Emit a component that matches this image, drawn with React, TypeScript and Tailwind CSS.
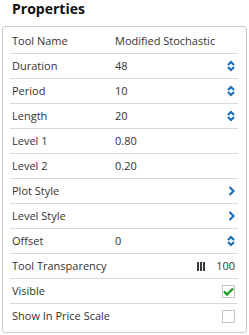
import type { ReactNode } from 'react';

// ─── Types ────────────────────────────────────────────────────────────────────

type Control = 'spin' | 'chevron' | 'slider' | 'checked' | 'unchecked' | null;

interface PropRow {
  label: string;
  value?: string;
  control: Control;
}

const ROWS: PropRow[] = [
  { label: 'Tool Name', value: 'Modified Stochastic', control: null },
  { label: 'Duration', value: '48', control: 'spin' },
  { label: 'Period', value: '10', control: 'spin' },
  { label: 'Length', value: '20', control: 'spin' },
  { label: 'Level 1', value: '0.80', control: null },
  { label: 'Level 2', value: '0.20', control: null },
  { label: 'Plot Style', control: 'chevron' },
  { label: 'Level Style', control: 'chevron' },
  { label: 'Offset', value: '0', control: 'spin' },
  { label: 'Tool Transparency', control: 'slider' },
  { label: 'Visible', control: 'checked' },
  { label: 'Show In Price Scale', control: 'unchecked' },
];

// ─── Icons ────────────────────────────────────────────────────────────────────

function SpinIcon() {
  return (
    <svg width="8" height="12" viewBox="0 0 8 12" className="block">
      <path d="M1 5 L4 2 L7 5" fill="none" stroke="#1d6fb8" strokeWidth="2.2" />
      <path d="M1 7 L4 10 L7 7" fill="none" stroke="#1d6fb8" strokeWidth="2.2" />
    </svg>
  );
}

function ChevronIcon() {
  return (
    <svg width="7" height="10" viewBox="0 0 7 10" className="block">
      <path d="M1.5 1 L5.5 5 L1.5 9" fill="none" stroke="#1d6fb8" strokeWidth="2.2" />
    </svg>
  );
}

function Checkbox({ checked }: { checked: boolean }) {
  return (
    <span className="flex h-[13px] w-[13px] items-center justify-center border border-[#c4c4c4] bg-white">
      {checked && (
        <svg width="11" height="9" viewBox="0 0 11 9" className="block">
          <path d="M1 4.5 L4 7.5 L10 1.5" fill="none" stroke="#1f9a22" strokeWidth="2.4" />
        </svg>
      )}
    </span>
  );
}

function renderControl(control: Control): ReactNode {
  switch (control) {
    case 'spin':
      return <SpinIcon />;
    case 'chevron':
      return <ChevronIcon />;
    case 'slider':
      return (
        <span className="flex items-center">
          <span className="flex h-[9px] gap-[1px]">
            <span className="w-[2px] bg-[#3a3a3a]" />
            <span className="w-[2px] bg-[#3a3a3a]" />
            <span className="w-[2px] bg-[#3a3a3a]" />
          </span>
          <span className="ml-[11px]">100</span>
        </span>
      );
    case 'checked':
      return <Checkbox checked />;
    case 'unchecked':
      return <Checkbox checked={false} />;
    default:
      return null;
  }
}

// ─── Page ─────────────────────────────────────────────────────────────────────

export default function App() {
  return (
    <div
      className="h-[335px] w-[249px] bg-white text-[#333]"
      style={{ fontFamily: '"Open Sans", "Liberation Sans", sans-serif' }}
    >
      <h2 className="pl-3 text-[14px] font-bold leading-[18px] text-[#111]">Properties</h2>

      <div className="mx-[2px] mt-2 rounded-[3px] border border-[#c9c9c9] pb-[3px] pl-[7px] pr-[8px] pt-[2px]">
        {ROWS.map((row, i) => (
          <div
            key={row.label}
            className={`flex h-[25px] items-center pl-[2px] pr-[3px] text-[11px] ${
              i < ROWS.length - 1 ? 'border-b border-[#d9d9d9]' : ''
            }`}
          >
            <span className="w-[103px] shrink-0">{row.label}</span>
            <span className="flex-1">{row.value}</span>
            <span className="flex items-center">{renderControl(row.control)}</span>
          </div>
        ))}
      </div>
    </div>
  );
}
